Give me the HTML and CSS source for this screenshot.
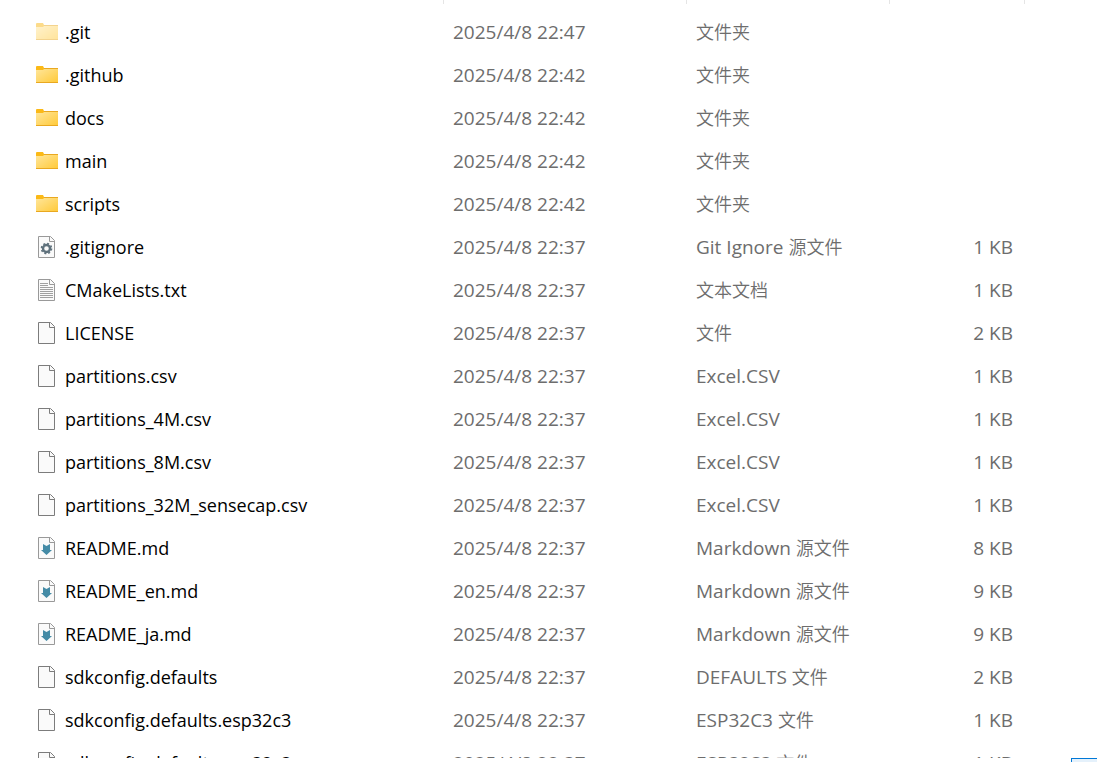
FILE: index.html
```html
<!DOCTYPE html>
<html lang="zh-CN">
<head>
    <meta charset="UTF-8">
    <meta name="viewport" content="width=device-width, initial-scale=1.0">
    <title>文件</title>
    <link rel="stylesheet" href="styles.css">
</head>
<body>
    <!-- Icon shapes, reused by every row -->
    <svg class="icon-defs" aria-hidden="true">
        <defs>
            <linearGradient id="folder-fill" x1="0" y1="0" x2="1" y2="1">
                <stop offset="0" stop-color="#ffe69b"/>
                <stop offset="1" stop-color="#ffc937"/>
            </linearGradient>
            <symbol id="folder" viewBox="0 0 24 23">
                <path d="M1 3q0-1 1-1h6l1 2h14v2H1z" fill="#fbb917"/>
                <path d="M1 6h7l1-1h14v14H1z" fill="url(#folder-fill)"/>
                <path d="M9 4.5h14M1 18.5h22" stroke="#e9a820" fill="none"/>
            </symbol>
            <symbol id="page" viewBox="0 0 24 23">
                <path d="M3.5 .5h12l4 4v17h-16z" fill="#fafafa"/>
                <path d="M3.5 .5h12l4 4v17h-16zM14.5 .5v5h5" fill="none" stroke="currentColor"/>
            </symbol>
            <symbol id="text" viewBox="0 0 24 23">
                <use href="#page"/>
                <path d="M5 4.5h8M5 6.5h8M5 8.5h13M5 10.5h13M5 12.5h13M5 14.5h13M5 16.5h13M5 18.5h13" stroke="#a0a0a0"/>
            </symbol>
            <symbol id="gear" viewBox="0 0 24 23">
                <use href="#page"/>
                <circle cx="11.5" cy="12.5" r="3.5" fill="none" stroke="#5f717c" stroke-width="2.4"/>
                <circle cx="11.5" cy="12.5" r="5" fill="none" stroke="#5f717c" stroke-width="1.6" stroke-dasharray="2 1.927"/>
            </symbol>
            <symbol id="markdown" viewBox="0 0 24 23">
                <use href="#page"/>
                <path d="M8 7l3.5 2L15 7v6h2l-5.5 5L6 13h2z" fill="#448ba6"/>
            </symbol>
        </defs>
    </svg>

    <main class="files">
        <table class="file-table">
            <colgroup>
                <col class="col-name">
                <col class="col-date">
                <col class="col-type">
                <col class="col-size">
                <col>
            </colgroup>
            <thead>
                <tr>
                    <th aria-label="名称"><div class="divider"></div></th>
                    <th aria-label="修改日期"><div class="divider"></div></th>
                    <th aria-label="类型"><div class="divider"></div></th>
                    <th aria-label="大小"><div class="divider"></div></th>
                    <th></th>
                </tr>
            </thead>
            <tbody>
                <tr>
                    <td><div class="name"><svg class="icon hidden-item"><use href="#folder"/></svg>.git</div></td>
                    <td>2025/4/8 22:47</td><td><span class="zh">文件夹</span></td><td class="size"></td><td></td>
                </tr>
                <tr>
                    <td><div class="name"><svg class="icon"><use href="#folder"/></svg>.github</div></td>
                    <td>2025/4/8 22:42</td><td><span class="zh">文件夹</span></td><td class="size"></td><td></td>
                </tr>
                <tr>
                    <td><div class="name"><svg class="icon"><use href="#folder"/></svg>docs</div></td>
                    <td>2025/4/8 22:42</td><td><span class="zh">文件夹</span></td><td class="size"></td><td></td>
                </tr>
                <tr>
                    <td><div class="name"><svg class="icon"><use href="#folder"/></svg>main</div></td>
                    <td>2025/4/8 22:42</td><td><span class="zh">文件夹</span></td><td class="size"></td><td></td>
                </tr>
                <tr>
                    <td><div class="name"><svg class="icon"><use href="#folder"/></svg>scripts</div></td>
                    <td>2025/4/8 22:42</td><td><span class="zh">文件夹</span></td><td class="size"></td><td></td>
                </tr>
                <tr>
                    <td><div class="name"><svg class="icon light"><use href="#gear"/></svg>.gitignore</div></td>
                    <td>2025/4/8 22:37</td><td>Git Ignore <span class="zh">源文件</span></td><td class="size">1 KB</td><td></td>
                </tr>
                <tr>
                    <td><div class="name"><svg class="icon light"><use href="#text"/></svg>CMakeLists.txt</div></td>
                    <td>2025/4/8 22:37</td><td><span class="zh">文本文档</span></td><td class="size">1 KB</td><td></td>
                </tr>
                <tr>
                    <td><div class="name"><svg class="icon"><use href="#page"/></svg>LICENSE</div></td>
                    <td>2025/4/8 22:37</td><td><span class="zh">文件</span></td><td class="size">2 KB</td><td></td>
                </tr>
                <tr>
                    <td><div class="name"><svg class="icon"><use href="#page"/></svg>partitions.csv</div></td>
                    <td>2025/4/8 22:37</td><td>Excel.CSV</td><td class="size">1 KB</td><td></td>
                </tr>
                <tr>
                    <td><div class="name"><svg class="icon"><use href="#page"/></svg>partitions_4M.csv</div></td>
                    <td>2025/4/8 22:37</td><td>Excel.CSV</td><td class="size">1 KB</td><td></td>
                </tr>
                <tr>
                    <td><div class="name"><svg class="icon"><use href="#page"/></svg>partitions_8M.csv</div></td>
                    <td>2025/4/8 22:37</td><td>Excel.CSV</td><td class="size">1 KB</td><td></td>
                </tr>
                <tr>
                    <td><div class="name"><svg class="icon"><use href="#page"/></svg>partitions_32M_sensecap.csv</div></td>
                    <td>2025/4/8 22:37</td><td>Excel.CSV</td><td class="size">1 KB</td><td></td>
                </tr>
                <tr>
                    <td><div class="name"><svg class="icon light"><use href="#markdown"/></svg>README.md</div></td>
                    <td>2025/4/8 22:37</td><td>Markdown <span class="zh">源文件</span></td><td class="size">8 KB</td><td></td>
                </tr>
                <tr>
                    <td><div class="name"><svg class="icon light"><use href="#markdown"/></svg>README_en.md</div></td>
                    <td>2025/4/8 22:37</td><td>Markdown <span class="zh">源文件</span></td><td class="size">9 KB</td><td></td>
                </tr>
                <tr>
                    <td><div class="name"><svg class="icon light"><use href="#markdown"/></svg>README_ja.md</div></td>
                    <td>2025/4/8 22:37</td><td>Markdown <span class="zh">源文件</span></td><td class="size">9 KB</td><td></td>
                </tr>
                <tr>
                    <td><div class="name"><svg class="icon"><use href="#page"/></svg>sdkconfig.defaults</div></td>
                    <td>2025/4/8 22:37</td><td>DEFAULTS <span class="zh">文件</span></td><td class="size">2 KB</td><td></td>
                </tr>
                <tr>
                    <td><div class="name"><svg class="icon"><use href="#page"/></svg>sdkconfig.defaults.esp32c3</div></td>
                    <td>2025/4/8 22:37</td><td>ESP32C3 <span class="zh">文件</span></td><td class="size">1 KB</td><td></td>
                </tr>
                <tr>
                    <td><div class="name"><svg class="icon"><use href="#page"/></svg>sdkconfig.defaults.esp32s3</div></td>
                    <td>2025/4/8 22:37</td><td>ESP32S3 <span class="zh">文件</span></td><td class="size">1 KB</td><td></td>
                </tr>
            </tbody>
        </table>
    </main>

    <footer class="status-bar">
        <button class="view-btn" type="button" aria-label="详细信息"></button>
    </footer>
</body>
</html>
```
FILE: styles.css
```css
html {
    font-family: "Open Sans", "Noto Sans CJK SC", sans-serif;
    font-size: 19px;
    background-color: #ffffff;
    color: #000000;
}
body {
    margin: 0;
    height: 100vh;
    display: flex;
    flex-direction: column;
    overflow: hidden;
}

.icon-defs {
    position: absolute;
    width: 0;
    height: 0;
}

.files {
    flex: 1;
    min-height: 0;
    overflow: hidden;
}
.file-table {
    width: 100%;
    table-layout: fixed;
    border-collapse: collapse;
    line-height: 24px;
}
.col-name {
    width: 444px;
}
.col-date {
    width: 243px;
}
.col-type {
    width: 203px;
}
.col-size {
    width: 135px;
}

th {
    height: 11px;
    padding: 0;
    vertical-align: top;
}
.divider {
    height: 4px;
    border-right: 1px solid #e5e5e5;
}

td {
    height: 41px;
    padding: 0 0 2px 9px;
    color: #6d6d6d;
    white-space: nowrap;
}
td:first-child {
    padding-left: 35px;
    color: #000000;
}
td.size {
    padding-right: 12px;
    text-align: right;
}
.name {
    display: flex;
    align-items: center;
    gap: 6px;
    font-size: 18px;
}
.zh {
    font-family: "Noto Sans CJK SC", sans-serif;
    font-size: 18px;
    font-weight: 350;
}

.icon {
    flex: none;
    width: 24px;
    height: 23px;
    margin-top: 2px;
    color: #7c7c7c;
}
.icon.light {
    color: #999999;
}
.icon.hidden-item {
    opacity: 0.5;
}

.status-bar {
    display: flex;
    justify-content: flex-end;
    height: 4px;
    overflow: hidden;
}
.view-btn {
    width: 26px;
    height: 24px;
    padding: 0;
    border: 1px solid #0078d7;
    border-right: none;
    background-color: #e5f1fb;
}
```
